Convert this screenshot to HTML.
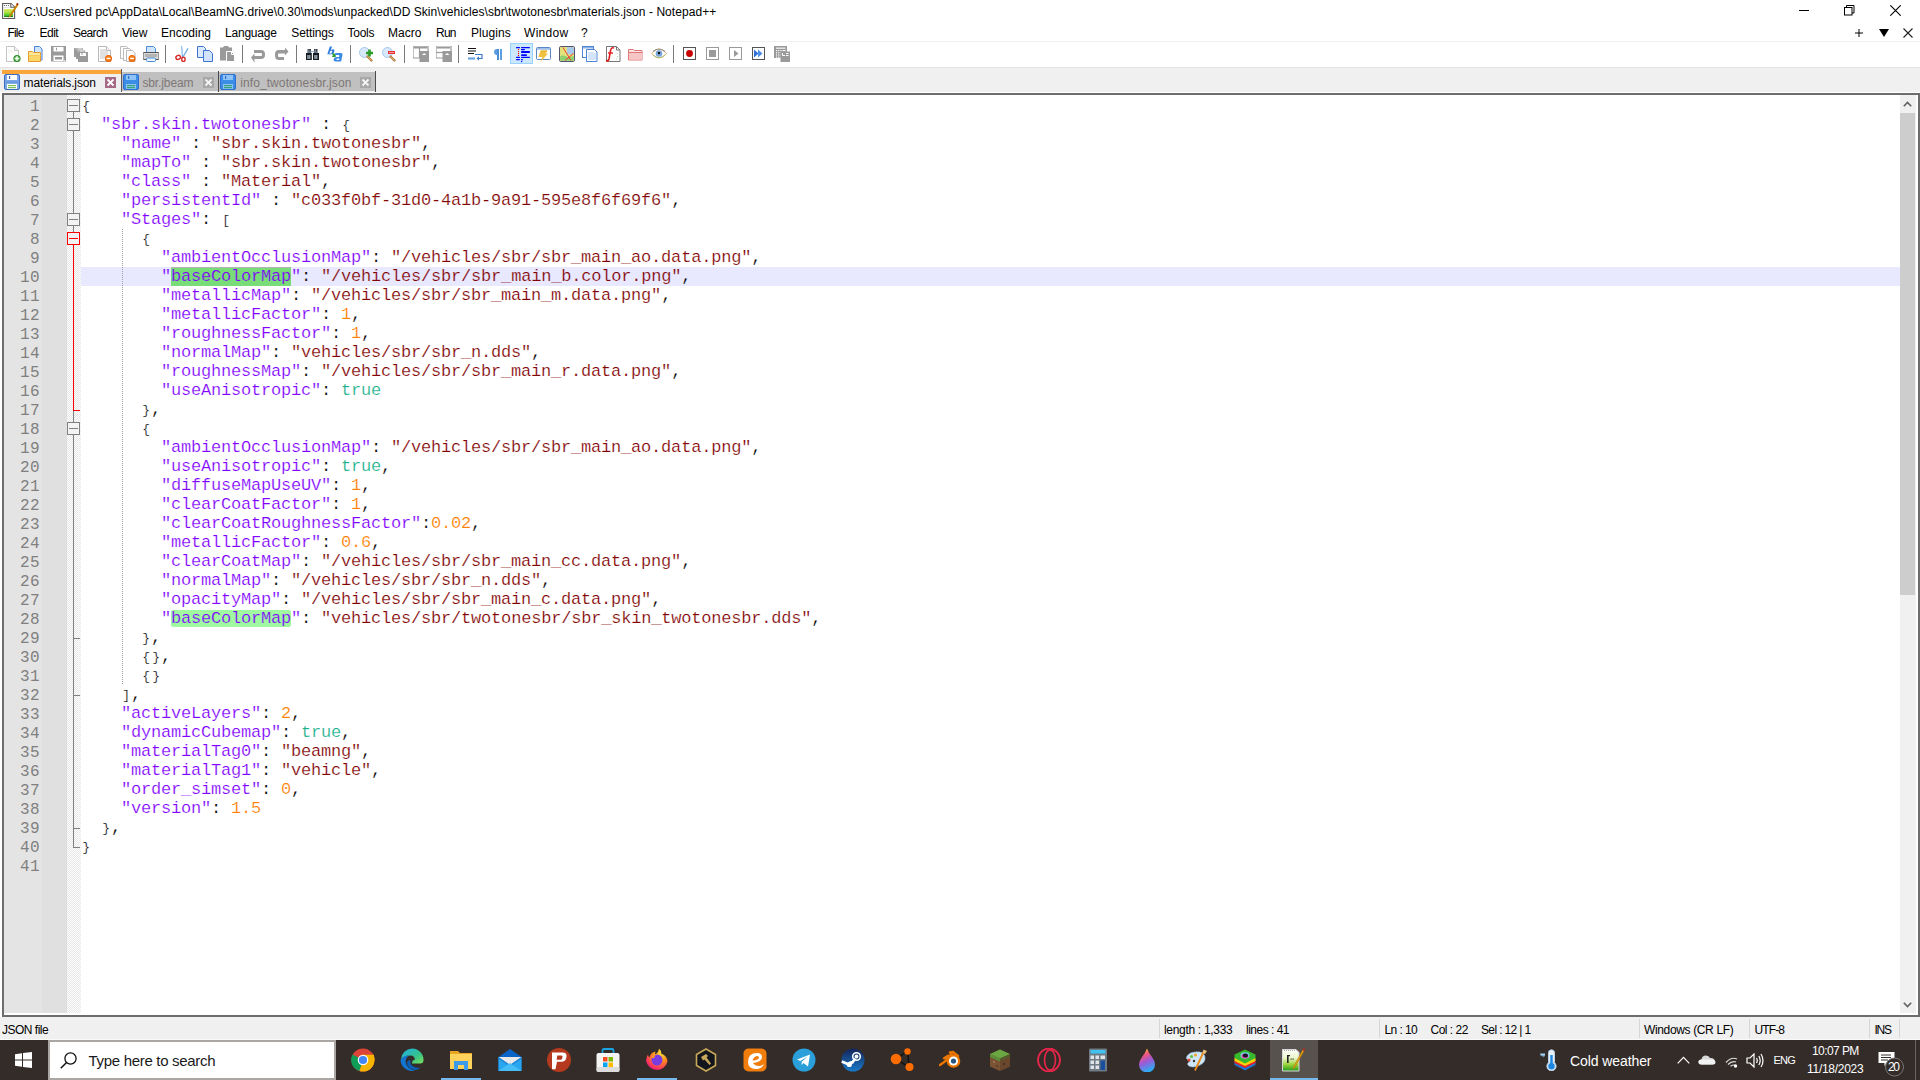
<!DOCTYPE html><html><head><meta charset="utf-8"><title>materials.json - Notepad++</title><style>
*{box-sizing:border-box}
html,body{margin:0;padding:0}
body{width:1920px;height:1080px;position:relative;overflow:hidden;background:#fff;font-family:"Liberation Sans",sans-serif;}
.a{position:absolute;display:block}
.ui{font-family:"Liberation Sans",sans-serif;font-size:12px;color:#000;white-space:pre;line-height:15px}
.code{font-family:"Liberation Mono",monospace;font-size:17px;letter-spacing:-0.2px;-webkit-text-stroke:0.2px #fff;white-space:pre;line-height:19px;height:19px;left:81px}
.b{display:inline-block;width:10px;text-align:center;font-size:13px;position:relative;top:0px}
.k{color:#8000ff}.s{color:#800000}.n{color:#ff8000}.t{color:#18af8a}.o{color:#000}
.ln{font-family:"Liberation Mono",monospace;font-size:16px;letter-spacing:0.4px;color:#808080;text-align:right;width:40px;margin-top:2px;left:0;line-height:19px;height:19px;white-space:pre}
.tb{font-family:"Liberation Sans",sans-serif;font-size:15px;color:#fff;white-space:pre;line-height:18px}
</style></head><body><div class="a" style="left:24.00px;top:5px;font-family:'Liberation Sans',sans-serif;font-size:12px;line-height:15px;color:#000;white-space:pre;letter-spacing:0.055px;">C:\Users\red pc\AppData\Local\BeamNG.drive\0.30\mods\unpacked\DD Skin\vehicles\sbr\twotonesbr\materials.json - Notepad++</div><svg class="a" style="left:0px;top:0px" width="20" height="22" viewBox="0 0 20 22"><defs><linearGradient id="ng" x1="0" y1="0" x2="0" y2="1"><stop offset="0" stop-color="#dfe86a"/><stop offset="0.45" stop-color="#a8e03a"/><stop offset="0.85" stop-color="#3cbf2a"/><stop offset="1" stop-color="#0a5a0a"/></linearGradient></defs>
<path d="M2.6 3.5h8.4l3.6 3.6v11.4h-12z" fill="#fff" stroke="#5a5a5a" stroke-width="1.1"/>
<path d="M10.8 3.6v3.6h3.6" fill="#fff" stroke="#5a5a5a" stroke-width="1.1"/>
<circle cx="4.5" cy="5.5" r="0.6" fill="#555"/><circle cx="6.5" cy="5.5" r="0.6" fill="#555"/><circle cx="8.5" cy="5.5" r="0.6" fill="#555"/>
<path d="M4.2 7.6h5.6" stroke="#c9d9e4" stroke-width="0.8"/>
<rect x="4" y="9" width="9" height="8" rx="0.6" fill="url(#ng)"/>
<path d="M17.2 4.3L10 15.5l-0.4 0.9 0.8-0.5L17.8 4.9z" fill="#f2b000" stroke="#c88400" stroke-width="1.2"/>
<path d="M16.6 3.2h1.6v1.6h-1.6z" fill="#8a0000"/></svg><div class="a" style="left:1799px;top:10px;width:10px;height:1px;background:#000"></div><svg class="a" style="left:1844px;top:5px" width="11" height="11" viewBox="0 0 11 11"><rect x="0.5" y="2.5" width="7.5" height="7.5" fill="none" stroke="#000"/><path d="M2.5 2.5v-2h7.5v7.5h-2" fill="none" stroke="#000"/></svg><svg class="a" style="left:1890px;top:5px" width="11" height="11" viewBox="0 0 11 11"><path d="M0.3 0.3L10.7 10.7M10.7 0.3L0.3 10.7" stroke="#000" stroke-width="1.1"/></svg><div class="a" style="left:7.50px;top:26px;font-family:'Liberation Sans',sans-serif;font-size:12px;line-height:15px;color:#000;white-space:pre;letter-spacing:-0.833px;">File</div><div class="a" style="left:39.40px;top:26px;font-family:'Liberation Sans',sans-serif;font-size:12px;line-height:15px;color:#000;white-space:pre;letter-spacing:-0.467px;">Edit</div><div class="a" style="left:73.10px;top:26px;font-family:'Liberation Sans',sans-serif;font-size:12px;line-height:15px;color:#000;white-space:pre;letter-spacing:-0.620px;">Search</div><div class="a" style="left:122.00px;top:26px;font-family:'Liberation Sans',sans-serif;font-size:12px;line-height:15px;color:#000;white-space:pre;letter-spacing:-0.167px;">View</div><div class="a" style="left:161.00px;top:26px;font-family:'Liberation Sans',sans-serif;font-size:12px;line-height:15px;color:#000;white-space:pre;letter-spacing:0.000px;">Encoding</div><div class="a" style="left:225.00px;top:26px;font-family:'Liberation Sans',sans-serif;font-size:12px;line-height:15px;color:#000;white-space:pre;letter-spacing:-0.214px;">Language</div><div class="a" style="left:291.30px;top:26px;font-family:'Liberation Sans',sans-serif;font-size:12px;line-height:15px;color:#000;white-space:pre;letter-spacing:-0.114px;">Settings</div><div class="a" style="left:347.50px;top:26px;font-family:'Liberation Sans',sans-serif;font-size:12px;line-height:15px;color:#000;white-space:pre;letter-spacing:-0.250px;">Tools</div><div class="a" style="left:388.00px;top:26px;font-family:'Liberation Sans',sans-serif;font-size:12px;line-height:15px;color:#000;white-space:pre;letter-spacing:0.000px;">Macro</div><div class="a" style="left:436.00px;top:26px;font-family:'Liberation Sans',sans-serif;font-size:12px;line-height:15px;color:#000;white-space:pre;letter-spacing:-0.750px;">Run</div><div class="a" style="left:471.00px;top:26px;font-family:'Liberation Sans',sans-serif;font-size:12px;line-height:15px;color:#000;white-space:pre;letter-spacing:0.083px;">Plugins</div><div class="a" style="left:524.00px;top:26px;font-family:'Liberation Sans',sans-serif;font-size:12px;line-height:15px;color:#000;white-space:pre;letter-spacing:0.300px;">Window</div><div class="a" style="left:581.00px;top:26px;font-family:'Liberation Sans',sans-serif;font-size:12px;line-height:15px;color:#000;white-space:pre;letter-spacing:0.000px;">?</div><svg class="a" style="left:1855px;top:29px" width="8" height="8" viewBox="0 0 8 8"><path d="M4 0v8M0 4h8" stroke="#000" stroke-width="1"/></svg><svg class="a" style="left:1879px;top:29px" width="10" height="8" viewBox="0 0 10 8"><path d="M0 0h10L5 8z" fill="#000"/></svg><svg class="a" style="left:1903px;top:28px" width="10" height="10" viewBox="0 0 10 10"><path d="M0.5 0.5L9.5 9.5M9.5 0.5L0.5 9.5" stroke="#202020" stroke-width="1.1"/></svg><div class="a" style="left:0;top:41px;width:1920px;height:1px;background:#f0f0f0"></div><div class="a" style="left:0;top:67px;width:1920px;height:1px;background:#e3e3e3"></div><div class="a" style="left:510px;top:43px;width:23px;height:21px;background:#cce8ff;border:1px solid #99d1ff"></div><svg class="a" style="left:5px;top:46px" width="16" height="16" viewBox="0 0 16 16"><path d="M1.5 0.5h8l4 4v11h-12z" fill="#fff" stroke="#c4c4c4"/><path d="M9.5 0.5v4h4" fill="#f0f0f0" stroke="#c4c4c4"/>
<path d="M3 4h4M3 6h6" stroke="#eee"/>
<circle cx="12" cy="12.5" r="3.6" fill="#2f8f2f"/><circle cx="12" cy="12.5" r="2.6" fill="#55b24a"/><path d="M12 10.3v4.4M9.8 12.5h4.4" stroke="#fff" stroke-width="1.4"/></svg><svg class="a" style="left:28px;top:46px" width="16" height="16" viewBox="0 0 16 16"><path d="M6.5 0.5h5l2.5 2.5v11h-7.5z" fill="#cfe3fb" stroke="#4b86d6"/>
<path d="M0.5 5.5h4l1 1h7v9h-12z" fill="#fde79a" stroke="#e99a2c"/><path d="M0.5 9.5h12" stroke="#f7c95a"/><rect x="1" y="10" width="11" height="5" fill="#fbd66a"/></svg><svg class="a" style="left:51px;top:46px" width="16" height="16" viewBox="0 0 16 16"><path d="M0 0h15v15.5h-15z" fill="#9a9a9a"/><rect x="2.5" y="1" width="10" height="4.5" fill="#fff"/><rect x="5" y="1.8" width="1" height="2.5" fill="#9a9a9a"/>
<rect x="2.5" y="9.5" width="10" height="5.5" fill="#fff"/><rect x="4" y="11" width="7" height="2.5" fill="#9a9a9a"/><rect x="13.2" y="14" width="1" height="1" fill="#fff"/></svg><svg class="a" style="left:74px;top:47px" width="16" height="16" viewBox="0 0 16 16"><path d="M0 1h9v9h-9z" fill="#9a9a9a"/><path d="M2 3h9v9h-9z" fill="#9a9a9a"/><path d="M4 5h10v10h-10z" fill="#9a9a9a"/>
<rect x="1.5" y="1.5" width="1" height="1" fill="#fff"/><rect x="3.5" y="1.5" width="5" height="1" fill="#fff"/><rect x="3.5" y="3.5" width="1" height="1" fill="#fff"/><rect x="5.5" y="3.5" width="5" height="1" fill="#fff"/>
<rect x="6" y="6" width="6" height="3" fill="#fff"/><rect x="7.5" y="6" width="1" height="2" fill="#9a9a9a"/></svg><svg class="a" style="left:97px;top:46px" width="16" height="16" viewBox="0 0 16 16"><path d="M1.5 0.5h8l4 4v11h-12z" fill="#fff" stroke="#b8b8b8"/><path d="M9.5 0.5v4h4" fill="#f4f4f4" stroke="#b8b8b8"/>
<path d="M3 4h6M3 6h8M3 8h8M3 10h6M3 12h5" stroke="#9a9a9a" stroke-width="0.6"/>
<circle cx="11.5" cy="12.5" r="3.5" fill="#e8600a"/><circle cx="11.5" cy="12.3" r="2.6" fill="#f4801e"/><rect x="9.6" y="11.8" width="3.8" height="1.3" fill="#fff"/></svg><svg class="a" style="left:120px;top:46px" width="16" height="16" viewBox="0 0 16 16"><path d="M0.5 0.5h6l2 2v10h-8z" fill="#fff" stroke="#bbb"/><path d="M3.5 2.5h6l2 2v10h-8z" fill="#fff" stroke="#bbb"/><path d="M6.5 4.5h6l2.5 2.5v8.5h-8.5z" fill="#fff" stroke="#bbb"/>
<circle cx="12" cy="12.5" r="3.5" fill="#e8600a"/><circle cx="12" cy="12.3" r="2.6" fill="#f4801e"/><rect x="10.1" y="11.8" width="3.8" height="1.3" fill="#fff"/></svg><svg class="a" style="left:143px;top:46px" width="16" height="16" viewBox="0 0 16 16"><path d="M3.5 0.5h7l2 2v5h-9z" fill="#cfe4fb" stroke="#4b8fd9"/>
<path d="M1 6.5h14q1 0 1 1v5q0 1-1 1h-14q-1 0-1-1v-5q0-1 1-1z" fill="#d8d8d8" stroke="#555" stroke-width="1"/><rect x="2" y="8" width="12" height="3" fill="#b4b4b4"/><rect x="3.5" y="12" width="9" height="3.5" rx="1" fill="#eaf4ff" stroke="#4b8fd9"/></svg><svg class="a" style="left:174px;top:46px" width="16" height="16" viewBox="0 0 16 16"><path d="M7.5 0.2L8.6 11" stroke="#6aaee6" stroke-width="1.3"/><path d="M14 2.4L9.3 10.5" stroke="#6aaee6" stroke-width="1.3"/><path d="M7.6 1L8.4 9" stroke="#e6f2fb" stroke-width="0.5"/>
<ellipse cx="4.2" cy="11.4" rx="2.4" ry="1.9" fill="none" stroke="#d42a2a" stroke-width="1.4" transform="rotate(-25 4.2 11.4)"/><ellipse cx="9.4" cy="13.4" rx="1.7" ry="2.1" fill="none" stroke="#d42a2a" stroke-width="1.4"/></svg><svg class="a" style="left:197px;top:46px" width="16" height="16" viewBox="0 0 16 16"><path d="M0.5 0.5h6l2 2v9h-8z" fill="#dbe9fb" stroke="#3c74d0"/><path d="M6.5 4.5h6l3 3v8h-9z" fill="#d2e4fb" stroke="#3c74d0"/></svg><svg class="a" style="left:220px;top:46px" width="16" height="16" viewBox="0 0 16 16"><path d="M0 1.5h3l1-1.5h4l1 1.5h3v13h-12z" fill="#9a9a9a"/><path d="M6.5 5.5h5l3 3v7h-8z" fill="#9a9a9a" stroke="#fff" stroke-width="1"/><path d="M11.5 5.5v3h3" fill="none" stroke="#fff"/></svg><svg class="a" style="left:251px;top:47px" width="16" height="16" viewBox="0 0 16 16"><path d="M3 3h7q4 0 4 4v1q0 4-4 4h-4v-3h4q1 0 1-1v-1q0-1-1-1h-7z" fill="#9a9a9a"/><path d="M0 10.5L3.5 6.5v9z" fill="#9a9a9a"/><rect x="3" y="9" width="4" height="3" fill="#9a9a9a"/></svg><svg class="a" style="left:274px;top:47px" width="16" height="16" viewBox="0 0 16 16"><path d="M11 3h-6q-4 0-4 4v1.5q0 4.5 4 4.5h5v-3h-5q-1 0-1-1.5v-1q0-1 1-1h6z" fill="#9a9a9a"/><path d="M14.5 4.5L11 0.5v8z" fill="#9a9a9a"/></svg><svg class="a" style="left:306px;top:47px" width="16" height="16" viewBox="0 0 16 16"><path d="M1.5 2h3.5v5h-3.5z M8 2h3.5v5h-3.5z" fill="#3a4048"/><path d="M0 6h5.8v7h-5.8z M7 6h6v7h-6z" fill="#15181c"/><path d="M1 5.5q5.5-2 11 0" stroke="#8da2bb" stroke-width="1" fill="none"/>
<rect x="1.3" y="8" width="1.4" height="4" fill="#a9b8c8"/><rect x="3.2" y="8" width="1.2" height="4" fill="#a9b8c8"/><rect x="8.3" y="8" width="1.4" height="4" fill="#a9b8c8"/><rect x="10.2" y="8" width="1.2" height="4" fill="#a9b8c8"/><rect x="2.2" y="2.5" width="1.2" height="2.5" fill="#7c8794"/><rect x="8.8" y="2.5" width="1.2" height="2.5" fill="#7c8794"/></svg><svg class="a" style="left:327px;top:46px" width="16" height="16" viewBox="0 0 16 16"><path d="M2.8 0.5h2.2l-1.3 4.2q1.2-1.4 2.4-1.4q1.6 0 1.3 1.8l-0.5 1.6q-0.6 1.6-2.4 1.6h-4.2z M3 5.5l-0.6 2h1.2q0.9 0 1.2-0.9l0.3-1q0.2-0.9-0.5-0.9q-0.9 0-1.6 0.8z" fill="#2f7de0"/>
<path d="M5.5 7.5l2.5 2.5M8 7.5v2.8h-2.8" stroke="#2e9a2e" stroke-width="1.4" fill="none"/>
<path d="M8.5 7h5.5q1.8 0 1.5 1.8l-1.4 6.7h-5.4q-2.4 0-2-2.2q0.4-2.4 2.9-2.4h2.5l0.2-1q0.2-0.9-0.8-0.9h-3.5z M10.5 12.5q-1 0-1.1 0.8q-0.1 0.7 0.7 0.7h2l0.3-1.5z" fill="#3b8ae6"/></svg><svg class="a" style="left:359px;top:47px" width="16" height="16" viewBox="0 0 16 16"><circle cx="5.5" cy="5.5" r="5" fill="#d8e8fb" stroke="#a9c7ee"/><path d="M8.5 9.5l4 4" stroke="#b07a3a" stroke-width="2.4" stroke-linecap="round"/><path d="M8.5 9.5l4 4" stroke="#e8b070" stroke-width="1"/>
<path d="M10.5 2.5v7M7 6h7" stroke="#2a9a2a" stroke-width="2.6"/></svg><svg class="a" style="left:382px;top:47px" width="16" height="16" viewBox="0 0 16 16"><circle cx="5.5" cy="5.5" r="5" fill="#d8e8fb" stroke="#a9c7ee"/><path d="M8.5 9.5l4 4" stroke="#b07a3a" stroke-width="2.4" stroke-linecap="round"/><path d="M8.5 9.5l4 4" stroke="#e8b070" stroke-width="1"/>
<rect x="6" y="4" width="7" height="3" fill="#e53333"/><rect x="7" y="5" width="5" height="1" fill="#ff9090"/></svg><svg class="a" style="left:413px;top:46px" width="16" height="16" viewBox="0 0 16 16"><path d="M0.5 0.5h14v1h-14z" fill="#9a9a9a"/><path d="M0 0h15v12h-15z" fill="none" stroke="#9a9a9a" stroke-width="1.2"/><path d="M6.5 2v10" stroke="#9a9a9a" stroke-width="1.2"/>
<rect x="6.5" y="5" width="9.5" height="11" fill="#9a9a9a"/><path d="M9 9l2.2-2 2.2 2z" fill="#fff"/><rect x="1" y="1" width="13" height="1.5" fill="#9a9a9a"/></svg><svg class="a" style="left:436px;top:46px" width="16" height="16" viewBox="0 0 16 16"><path d="M0 0h15v12h-15z" fill="none" stroke="#9a9a9a" stroke-width="1.2"/><rect x="1" y="1" width="13" height="1.5" fill="#9a9a9a"/><path d="M0 6.5h15" stroke="#9a9a9a" stroke-width="1.2"/>
<rect x="6.5" y="5" width="9.5" height="11" fill="#9a9a9a"/><path d="M9 9l2.2-2 2.2 2z" fill="#fff"/></svg><svg class="a" style="left:467px;top:47px" width="16" height="16" viewBox="0 0 16 16"><path d="M1 1.5h8M1 4h8M1 6.5h6" stroke="#111" stroke-width="1.2"/><path d="M1 11.5h7" stroke="#6aa3e0" stroke-width="2.2"/><path d="M8 7.5h7v4h-3" fill="none" stroke="#3c78c8" stroke-width="1.2"/><path d="M12 9.2v4.6l-2.5-2.3z" fill="#3c78c8"/></svg><svg class="a" style="left:491px;top:48px" width="16" height="16" viewBox="0 0 16 16"><path d="M4 1h4v11h-2v-5q-3 0-3-3t3-3z" fill="#5a9ee4"/><rect x="6" y="1" width="2" height="11" fill="#4a8ed8"/><rect x="9" y="1" width="2" height="11" fill="#5a9ee4"/></svg><svg class="a" style="left:515px;top:47px" width="16" height="16" viewBox="0 0 16 16"><g fill="#0000ff"><rect x="1" y="0" width="4" height="1.3" rx="0.6"/><rect x="6" y="0" width="9" height="1.3" rx="0.6"/><rect x="6" y="2" width="4" height="1.2" rx="0.6"/><rect x="6" y="4" width="9" height="2" rx="0.8"/><rect x="6" y="7.2" width="6" height="1.8" rx="0.8"/>
<rect x="1" y="9.8" width="4" height="1.3" rx="0.6"/><rect x="6" y="9.8" width="9" height="1.3" rx="0.6"/><rect x="1" y="11.9" width="4" height="1.3" rx="0.6"/><rect x="6" y="11.9" width="2" height="1.3" rx="0.6"/><circle cx="6.6" cy="14.5" r="0.7"/></g>
<g fill="#ff0000"><circle cx="3.5" cy="2.6" r="0.65"/><circle cx="3.5" cy="4.6" r="0.65"/><circle cx="3.5" cy="6.5" r="0.65"/><circle cx="3.5" cy="8.4" r="0.65"/></g></svg><svg class="a" style="left:536px;top:47px" width="16" height="16" viewBox="0 0 16 16"><rect x="0.5" y="0.5" width="14" height="12" rx="1" fill="#fff" stroke="#5b86c4"/><rect x="1" y="1" width="13" height="1.8" fill="#9dbfe8"/><path d="M4.5 3.5h7l-2 3h2.5l-7.5 8.5 1.8-5h-4z" fill="#f0c040"/><path d="M5 4h6" stroke="#e0a820" stroke-width="0.8"/></svg><svg class="a" style="left:559px;top:46px" width="16" height="16" viewBox="0 0 16 16"><rect x="0.5" y="0.5" width="15" height="15" rx="1.2" fill="#e2e27a" stroke="#545474" stroke-width="1"/><path d="M8 1.2h6.8v7h-6.8z" fill="#a8c8ee"/><path d="M1.2 10q3-1 6 0.5t7.6-0.5v4.8h-13.6z" fill="#8cd070"/><path d="M4 1.5l8 13M6 14.5l8.5-7" stroke="#f04030" stroke-width="1"/></svg><svg class="a" style="left:582px;top:46px" width="16" height="16" viewBox="0 0 16 16"><path d="M0.5 0.5h11v2h-11z" fill="#8fb3e3"/><rect x="0.5" y="0.5" width="11" height="11" fill="none" stroke="#4b86d6"/><path d="M4.5 3.5h8l2.5 2.5v9.5h-10.5z" fill="#fff" stroke="#4b86d6"/><path d="M6 6h6l2 2v6h-8z" fill="#d4e4fa"/></svg><svg class="a" style="left:605px;top:46px" width="16" height="16" viewBox="0 0 16 16"><path d="M1.5 0.5h10l3.5 3.5v11.5h-13.5z" fill="#fff" stroke="#777"/><path d="M11.5 0.5v3.5h3.5" fill="none" stroke="#777"/><path d="M9 2q-3-1-3.5 3l-1.5 8q-0.5 2-3 2" fill="none" stroke="#e02020" stroke-width="1.6"/><path d="M3 7h5" stroke="#e02020" stroke-width="1.4"/>
<path d="M12 7v1M12.5 10v1M11 13h1" stroke="#9c9" stroke-width="0.8"/></svg><svg class="a" style="left:628px;top:48px" width="16" height="16" viewBox="0 0 16 16"><path d="M0.5 1.5h5l1 1h7.5v9.5h-13.5z" fill="#fbe1e1" stroke="#e07a7a"/><path d="M1 5h13v6.5h-13z" fill="#f6c6c6"/><path d="M0.5 4.5h14" stroke="#e07a7a"/></svg><svg class="a" style="left:651px;top:47px" width="16" height="16" viewBox="0 0 16 16"><path d="M0.5 6.5q7.5-9 15 0q-7.5 9-15 0z" fill="#fff" stroke="#e3b36a" stroke-width="1"/><path d="M2 4.5q6-5 12 0" stroke="#8a8a8a" stroke-width="1.2" fill="none"/><circle cx="8" cy="6.5" r="3.3" fill="#7aa6d8"/><circle cx="8" cy="6" r="1.2" fill="#111"/><path d="M2 8q6 5 12 0" stroke="#7ab07a" stroke-width="0.6" fill="none"/></svg><svg class="a" style="left:683px;top:47px" width="16" height="16" viewBox="0 0 16 16"><rect x="0.5" y="0.5" width="12" height="12" fill="#fff" stroke="#555"/><circle cx="6.5" cy="6.5" r="3.4" fill="#c80000"/></svg><svg class="a" style="left:706px;top:47px" width="16" height="16" viewBox="0 0 16 16"><rect x="0.5" y="0.5" width="12" height="12" fill="#fff" stroke="#9a9a9a"/><rect x="3" y="3" width="7" height="7" fill="#9a9a9a"/></svg><svg class="a" style="left:729px;top:47px" width="16" height="16" viewBox="0 0 16 16"><rect x="0.5" y="0.5" width="12" height="12" fill="#fff" stroke="#9a9a9a"/><path d="M5 3v7l4.5-3.5z" fill="#9a9a9a"/></svg><svg class="a" style="left:752px;top:47px" width="16" height="16" viewBox="0 0 16 16"><rect x="0.5" y="0.5" width="12" height="12" fill="#fff" stroke="#555"/><path d="M2 2.5v8l4.5-4z" fill="#2e6fd8"/><path d="M6 2.5v8l4.5-4z" fill="#4a8ee8"/></svg><svg class="a" style="left:774px;top:46px" width="16" height="16" viewBox="0 0 16 16"><rect x="0" y="0" width="13" height="12" fill="#9a9a9a"/><rect x="2" y="1.6" width="9.5" height="1.1" fill="#fff"/><rect x="8.5" y="4" width="3" height="1.1" fill="#fff"/><rect x="2.0" y="4.0" width="1.2" height="1.2" fill="#fff"/><rect x="4.2" y="4.0" width="1.2" height="1.2" fill="#fff"/><rect x="6.4" y="4.0" width="1.2" height="1.2" fill="#fff"/><rect x="2.0" y="6.2" width="1.2" height="1.2" fill="#fff"/><rect x="4.2" y="6.2" width="1.2" height="1.2" fill="#fff"/><rect x="6.4" y="6.2" width="1.2" height="1.2" fill="#fff"/><rect x="2.0" y="8.4" width="1.2" height="1.2" fill="#fff"/><rect x="4.2" y="8.4" width="1.2" height="1.2" fill="#fff"/><rect x="6.4" y="8.4" width="1.2" height="1.2" fill="#fff"/><rect x="2.0" y="10.6" width="1.2" height="1.2" fill="#fff"/><rect x="4.2" y="10.6" width="1.2" height="1.2" fill="#fff"/><rect x="6.4" y="10.6" width="1.2" height="1.2" fill="#fff"/><rect x="6.5" y="5.5" width="9.5" height="10.5" fill="#9a9a9a"/><path d="M8.5 7v2.5h2.5M12 7.5h2.5M12 9.5h2.5" stroke="#fff" stroke-width="1" fill="none"/></svg><div class="a" style="left:165px;top:45px;width:1px;height:18px;background:#7a7a7a"></div><div class="a" style="left:242px;top:45px;width:1px;height:18px;background:#7a7a7a"></div><div class="a" style="left:296px;top:45px;width:1px;height:18px;background:#7a7a7a"></div><div class="a" style="left:350px;top:45px;width:1px;height:18px;background:#7a7a7a"></div><div class="a" style="left:404px;top:45px;width:1px;height:18px;background:#7a7a7a"></div><div class="a" style="left:458px;top:45px;width:1px;height:18px;background:#7a7a7a"></div><div class="a" style="left:673px;top:45px;width:1px;height:18px;background:#7a7a7a"></div><div class="a" style="left:0;top:68px;width:1920px;height:25px;background:#f0f0f0"></div><div class="a" style="left:2px;top:70px;width:119px;height:23px;background:#efefef"></div><div class="a" style="left:2px;top:70px;width:119px;height:4px;background:#faa63a"></div><div class="a" style="left:121px;top:69px;width:1px;height:24px;background:#5a5a5a"></div><svg class="a" style="left:4px;top:74px" width="16" height="16" viewBox="0 0 16 16"><rect x="0.5" y="0.5" width="15" height="15" rx="1.5" fill="#7da6e6" stroke="#3a6cc0"/><rect x="3" y="1" width="10" height="5" fill="#fff"/><rect x="5" y="2" width="1.2" height="3" fill="#3a6cc0"/>
<rect x="3" y="10" width="10" height="5" fill="#fff"/><rect x="4" y="11" width="8" height="1.2" fill="#7bc05a"/><rect x="4" y="13" width="8" height="1.2" fill="#7bc05a"/><rect x="1.5" y="7" width="13" height="2" fill="#6a9ae0"/></svg><div class="a" style="left:23.50px;top:76px;font-family:'Liberation Sans',sans-serif;font-size:12px;line-height:15px;color:#000;white-space:pre;letter-spacing:-0.115px;">materials.json</div><svg class="a" style="left:105px;top:77px" width="11" height="11" viewBox="0 0 11 11"><rect x="0" y="0" width="11" height="11" fill="#a56b86"/><path d="M2.5 2.5l6 6M8.5 2.5l-6 6" stroke="#fff" stroke-width="1.8"/></svg><div class="a" style="left:122px;top:72px;width:96px;height:19px;background:#c0c0c0"></div><div class="a" style="left:218px;top:71px;width:1px;height:21px;background:#4a4a4a"></div><svg class="a" style="left:123px;top:74px" width="16" height="16" viewBox="0 0 16 16"><rect x="0.5" y="0.5" width="15" height="15" rx="1.5" fill="#3b8de6" stroke="#2f6fcf"/><rect x="3" y="1" width="10" height="5" fill="#8fc3f5"/><rect x="5" y="2" width="1.2" height="3" fill="#2f6fcf"/>
<rect x="3" y="10" width="10" height="5" fill="#8fc3f5"/><rect x="4" y="11" width="8" height="1.2" fill="#3aa37a"/><rect x="4" y="13" width="8" height="1.2" fill="#3aa37a"/></svg><div class="a" style="left:142.40px;top:76px;font-family:'Liberation Sans',sans-serif;font-size:12px;line-height:15px;color:#7d7775;white-space:pre;letter-spacing:-0.113px;">sbr.jbeam</div><svg class="a" style="left:203px;top:77px" width="11" height="11" viewBox="0 0 11 11"><rect x="0" y="0" width="11" height="11" fill="#a8a8a8"/><path d="M2.5 2.5l6 6M8.5 2.5l-6 6" stroke="#f4f4f4" stroke-width="1.8"/></svg><div class="a" style="left:219px;top:72px;width:156px;height:19px;background:#c0c0c0"></div><div class="a" style="left:375px;top:71px;width:1px;height:21px;background:#4a4a4a"></div><svg class="a" style="left:220px;top:74px" width="16" height="16" viewBox="0 0 16 16"><rect x="0.5" y="0.5" width="15" height="15" rx="1.5" fill="#3b8de6" stroke="#2f6fcf"/><rect x="3" y="1" width="10" height="5" fill="#8fc3f5"/><rect x="5" y="2" width="1.2" height="3" fill="#2f6fcf"/>
<rect x="3" y="10" width="10" height="5" fill="#8fc3f5"/><rect x="4" y="11" width="8" height="1.2" fill="#3aa37a"/><rect x="4" y="13" width="8" height="1.2" fill="#3aa37a"/></svg><div class="a" style="left:240.20px;top:76px;font-family:'Liberation Sans',sans-serif;font-size:12px;line-height:15px;color:#7d7775;white-space:pre;letter-spacing:0.095px;">info_twotonesbr.json</div><svg class="a" style="left:360px;top:77px" width="11" height="11" viewBox="0 0 11 11"><rect x="0" y="0" width="11" height="11" fill="#a8a8a8"/><path d="M2.5 2.5l6 6M8.5 2.5l-6 6" stroke="#f4f4f4" stroke-width="1.8"/></svg><div class="a" style="left:0;top:92px;width:1920px;height:1px;background:#fff"></div><div class="a" style="left:2px;top:93px;width:1918px;height:2px;background:#6d6d6d"></div><div class="a" style="left:2px;top:93px;width:2px;height:924px;background:#6d6d6d"></div><div class="a" style="left:1918px;top:93px;width:2px;height:924px;background:#6d6d6d"></div><div class="a" style="left:1916px;top:95px;width:2px;height:920px;background:#fff"></div><div class="a" style="left:2px;top:1015px;width:1918px;height:2px;background:#6d6d6d"></div><div class="a" style="left:4px;top:1013px;width:1912px;height:2px;background:#fff"></div><div class="a" style="left:4px;top:95px;width:38px;height:918px;background:#e4e4e4"></div><div class="a" style="left:42px;top:95px;width:25px;height:918px;background:#e0e0e0"></div><div class="a" style="left:67px;top:95px;width:14px;height:918px;background-color:#fff;background-image:conic-gradient(#e6e6e6 25%,#fff 0 50%,#e6e6e6 0 75%,#fff 0);background-size:2px 2px"></div><div class="a" style="left:1900px;top:95px;width:16px;height:918px;background:#f0f0f0"></div><div class="a" style="left:1900px;top:113px;width:15px;height:482px;background:#cdcdcd"></div><svg class="a" style="left:1903px;top:101px" width="9" height="6" viewBox="0 0 9 6"><path d="M0.8 5.2L4.5 1.5L8.2 5.2" fill="none" stroke="#606060" stroke-width="1.6"/></svg><svg class="a" style="left:1903px;top:1002px" width="9" height="6" viewBox="0 0 9 6"><path d="M0.8 0.8L4.5 4.5L8.2 0.8" fill="none" stroke="#606060" stroke-width="1.6"/></svg><div class="a" style="left:81px;top:267px;width:1819px;height:19px;background:#e8e8ff"></div><div class="a" style="left:171px;top:267px;width:120px;height:19px;background:#78dc78;border-top:1px solid #b4b4b4"></div><div class="a" style="left:171px;top:610px;width:120px;height:17px;background:#a0f8a0;border-radius:2px"></div><div class="a" style="left:122px;top:229px;width:1px;height:455px;background-image:linear-gradient(#a0a0a0 50%,transparent 50%);background-size:1px 2px"></div><svg class="a" style="left:0px;top:0px" width="81" height="1080" viewBox="0 0 81 1080"><rect x="73" y="112" width="1" height="736" fill="#808080"/><rect x="73" y="245" width="1" height="166" fill="#ff0000"/><rect x="73" y="638" width="7" height="1" fill="#808080"/><rect x="73" y="695" width="7" height="1" fill="#808080"/><rect x="73" y="828" width="7" height="1" fill="#808080"/><rect x="73" y="847" width="7" height="1" fill="#808080"/><rect x="73" y="410" width="7" height="1" fill="#ff0000"/><rect x="67.5" y="99.5" width="12" height="12" fill="#f3f3f3" stroke="#808080" stroke-width="1"/><rect x="69" y="105" width="9" height="1" fill="#808080"/><rect x="67.5" y="118.5" width="12" height="12" fill="#f3f3f3" stroke="#808080" stroke-width="1"/><rect x="69" y="124" width="9" height="1" fill="#808080"/><rect x="67.5" y="213.5" width="12" height="12" fill="#f3f3f3" stroke="#808080" stroke-width="1"/><rect x="69" y="219" width="9" height="1" fill="#808080"/><rect x="67.5" y="422.5" width="12" height="12" fill="#f3f3f3" stroke="#808080" stroke-width="1"/><rect x="69" y="428" width="9" height="1" fill="#808080"/><rect x="67.5" y="232.5" width="12" height="12" fill="#f3f3f3" stroke="#ff0000" stroke-width="1"/><rect x="69" y="238" width="9" height="1" fill="#ff0000"/></svg><div class="a ln" style="top:96px">1</div><div class="a code" style="top:96px"><span class="o"><span class="b">{</span></span></div><div class="a ln" style="top:115px">2</div><div class="a code" style="top:115px"><span class="o">  </span><span class="k">"sbr.skin.twotonesbr"</span><span class="o"> : <span class="b">{</span></span></div><div class="a ln" style="top:134px">3</div><div class="a code" style="top:134px"><span class="o">    </span><span class="k">"name"</span><span class="o"> : </span><span class="s">"sbr.skin.twotonesbr"</span><span class="o">,</span></div><div class="a ln" style="top:153px">4</div><div class="a code" style="top:153px"><span class="o">    </span><span class="k">"mapTo"</span><span class="o"> : </span><span class="s">"sbr.skin.twotonesbr"</span><span class="o">,</span></div><div class="a ln" style="top:172px">5</div><div class="a code" style="top:172px"><span class="o">    </span><span class="k">"class"</span><span class="o"> : </span><span class="s">"Material"</span><span class="o">,</span></div><div class="a ln" style="top:191px">6</div><div class="a code" style="top:191px"><span class="o">    </span><span class="k">"persistentId"</span><span class="o"> : </span><span class="s">"c033f0bf-31d0-4a1b-9a91-595e8f6f69f6"</span><span class="o">,</span></div><div class="a ln" style="top:210px">7</div><div class="a code" style="top:210px"><span class="o">    </span><span class="k">"Stages"</span><span class="o">: <span class="b">[</span></span></div><div class="a ln" style="top:229px">8</div><div class="a code" style="top:229px"><span class="o">      <span class="b">{</span></span></div><div class="a ln" style="top:248px">9</div><div class="a code" style="top:248px"><span class="o">        </span><span class="k">"ambientOcclusionMap"</span><span class="o">: </span><span class="s">"/vehicles/sbr/sbr_main_ao.data.png"</span><span class="o">,</span></div><div class="a ln" style="top:267px">10</div><div class="a code" style="top:267px;-webkit-text-stroke-color:#e8e8ff"><span class="o">        </span><span class="k">"<span style="-webkit-text-stroke-color:#78dc78">baseColorMap</span>"</span><span class="o">: </span><span class="s">"/vehicles/sbr/sbr_main_b.color.png"</span><span class="o">,</span></div><div class="a ln" style="top:286px">11</div><div class="a code" style="top:286px"><span class="o">        </span><span class="k">"metallicMap"</span><span class="o">: </span><span class="s">"/vehicles/sbr/sbr_main_m.data.png"</span><span class="o">,</span></div><div class="a ln" style="top:305px">12</div><div class="a code" style="top:305px"><span class="o">        </span><span class="k">"metallicFactor"</span><span class="o">: </span><span class="n">1</span><span class="o">,</span></div><div class="a ln" style="top:324px">13</div><div class="a code" style="top:324px"><span class="o">        </span><span class="k">"roughnessFactor"</span><span class="o">: </span><span class="n">1</span><span class="o">,</span></div><div class="a ln" style="top:343px">14</div><div class="a code" style="top:343px"><span class="o">        </span><span class="k">"normalMap"</span><span class="o">: </span><span class="s">"vehicles/sbr/sbr_n.dds"</span><span class="o">,</span></div><div class="a ln" style="top:362px">15</div><div class="a code" style="top:362px"><span class="o">        </span><span class="k">"roughnessMap"</span><span class="o">: </span><span class="s">"/vehicles/sbr/sbr_main_r.data.png"</span><span class="o">,</span></div><div class="a ln" style="top:381px">16</div><div class="a code" style="top:381px"><span class="o">        </span><span class="k">"useAnisotropic"</span><span class="o">: </span><span class="t">true</span></div><div class="a ln" style="top:400px">17</div><div class="a code" style="top:400px"><span class="o">      <span class="b">}</span>,</span></div><div class="a ln" style="top:419px">18</div><div class="a code" style="top:419px"><span class="o">      <span class="b">{</span></span></div><div class="a ln" style="top:438px">19</div><div class="a code" style="top:438px"><span class="o">        </span><span class="k">"ambientOcclusionMap"</span><span class="o">: </span><span class="s">"/vehicles/sbr/sbr_main_ao.data.png"</span><span class="o">,</span></div><div class="a ln" style="top:457px">20</div><div class="a code" style="top:457px"><span class="o">        </span><span class="k">"useAnisotropic"</span><span class="o">: </span><span class="t">true</span><span class="o">,</span></div><div class="a ln" style="top:476px">21</div><div class="a code" style="top:476px"><span class="o">        </span><span class="k">"diffuseMapUseUV"</span><span class="o">: </span><span class="n">1</span><span class="o">,</span></div><div class="a ln" style="top:495px">22</div><div class="a code" style="top:495px"><span class="o">        </span><span class="k">"clearCoatFactor"</span><span class="o">: </span><span class="n">1</span><span class="o">,</span></div><div class="a ln" style="top:514px">23</div><div class="a code" style="top:514px"><span class="o">        </span><span class="k">"clearCoatRoughnessFactor"</span><span class="o">:</span><span class="n">0.02</span><span class="o">,</span></div><div class="a ln" style="top:533px">24</div><div class="a code" style="top:533px"><span class="o">        </span><span class="k">"metallicFactor"</span><span class="o">: </span><span class="n">0.6</span><span class="o">,</span></div><div class="a ln" style="top:552px">25</div><div class="a code" style="top:552px"><span class="o">        </span><span class="k">"clearCoatMap"</span><span class="o">: </span><span class="s">"/vehicles/sbr/sbr_main_cc.data.png"</span><span class="o">,</span></div><div class="a ln" style="top:571px">26</div><div class="a code" style="top:571px"><span class="o">        </span><span class="k">"normalMap"</span><span class="o">: </span><span class="s">"/vehicles/sbr/sbr_n.dds"</span><span class="o">,</span></div><div class="a ln" style="top:590px">27</div><div class="a code" style="top:590px"><span class="o">        </span><span class="k">"opacityMap"</span><span class="o">: </span><span class="s">"/vehicles/sbr/sbr_main_c.data.png"</span><span class="o">,</span></div><div class="a ln" style="top:609px">28</div><div class="a code" style="top:609px"><span class="o">        </span><span class="k">"<span style="-webkit-text-stroke-color:#a0f8a0">baseColorMap</span>"</span><span class="o">: </span><span class="s">"vehicles/sbr/twotonesbr/sbr_skin_twotonesbr.dds"</span><span class="o">,</span></div><div class="a ln" style="top:628px">29</div><div class="a code" style="top:628px"><span class="o">      <span class="b">}</span>,</span></div><div class="a ln" style="top:647px">30</div><div class="a code" style="top:647px"><span class="o">      <span class="b">{</span><span class="b">}</span>,</span></div><div class="a ln" style="top:666px">31</div><div class="a code" style="top:666px"><span class="o">      <span class="b">{</span><span class="b">}</span></span></div><div class="a ln" style="top:685px">32</div><div class="a code" style="top:685px"><span class="o">    <span class="b">]</span>,</span></div><div class="a ln" style="top:704px">33</div><div class="a code" style="top:704px"><span class="o">    </span><span class="k">"activeLayers"</span><span class="o">: </span><span class="n">2</span><span class="o">,</span></div><div class="a ln" style="top:723px">34</div><div class="a code" style="top:723px"><span class="o">    </span><span class="k">"dynamicCubemap"</span><span class="o">: </span><span class="t">true</span><span class="o">,</span></div><div class="a ln" style="top:742px">35</div><div class="a code" style="top:742px"><span class="o">    </span><span class="k">"materialTag0"</span><span class="o">: </span><span class="s">"beamng"</span><span class="o">,</span></div><div class="a ln" style="top:761px">36</div><div class="a code" style="top:761px"><span class="o">    </span><span class="k">"materialTag1"</span><span class="o">: </span><span class="s">"vehicle"</span><span class="o">,</span></div><div class="a ln" style="top:780px">37</div><div class="a code" style="top:780px"><span class="o">    </span><span class="k">"order_simset"</span><span class="o">: </span><span class="n">0</span><span class="o">,</span></div><div class="a ln" style="top:799px">38</div><div class="a code" style="top:799px"><span class="o">    </span><span class="k">"version"</span><span class="o">: </span><span class="n">1.5</span></div><div class="a ln" style="top:818px">39</div><div class="a code" style="top:818px"><span class="o">  <span class="b">}</span>,</span></div><div class="a ln" style="top:837px">40</div><div class="a code" style="top:837px"><span class="o"><span class="b">}</span></span></div><div class="a ln" style="top:856px">41</div><div class="a" style="left:0;top:1017px;width:1920px;height:22px;background:#f0f0f0"></div><div class="a" style="left:0;top:1039px;width:1920px;height:1px;background:#fafafa"></div><div class="a" style="left:2.00px;top:1023px;font-family:'Liberation Sans',sans-serif;font-size:12px;line-height:15px;color:#000;white-space:pre;letter-spacing:-0.500px;">JSON file</div><div class="a" style="left:1159px;top:1019px;width:1px;height:19px;background:#d6d6d6"></div><div class="a" style="left:1379px;top:1019px;width:1px;height:19px;background:#d6d6d6"></div><div class="a" style="left:1639px;top:1019px;width:1px;height:19px;background:#d6d6d6"></div><div class="a" style="left:1749px;top:1019px;width:1px;height:19px;background:#d6d6d6"></div><div class="a" style="left:1869px;top:1019px;width:1px;height:19px;background:#d6d6d6"></div><div class="a" style="left:1899px;top:1019px;width:1px;height:19px;background:#d6d6d6"></div><div class="a" style="left:1164.00px;top:1023px;font-family:'Liberation Sans',sans-serif;font-size:12px;line-height:15px;color:#000;white-space:pre;letter-spacing:-0.308px;">length : 1,333</div><div class="a" style="left:1246.00px;top:1023px;font-family:'Liberation Sans',sans-serif;font-size:12px;line-height:15px;color:#000;white-space:pre;letter-spacing:-0.500px;">lines : 41</div><div class="a" style="left:1384.50px;top:1023px;font-family:'Liberation Sans',sans-serif;font-size:12px;line-height:15px;color:#000;white-space:pre;letter-spacing:-0.583px;">Ln : 10</div><div class="a" style="left:1430.50px;top:1023px;font-family:'Liberation Sans',sans-serif;font-size:12px;line-height:15px;color:#000;white-space:pre;letter-spacing:-0.500px;">Col : 22</div><div class="a" style="left:1481.00px;top:1023px;font-family:'Liberation Sans',sans-serif;font-size:12px;line-height:15px;color:#000;white-space:pre;letter-spacing:-0.636px;">Sel : 12 | 1</div><div class="a" style="left:1644.00px;top:1023px;font-family:'Liberation Sans',sans-serif;font-size:12px;line-height:15px;color:#000;white-space:pre;letter-spacing:-0.357px;">Windows (CR LF)</div><div class="a" style="left:1754.50px;top:1023px;font-family:'Liberation Sans',sans-serif;font-size:12px;line-height:15px;color:#000;white-space:pre;letter-spacing:-0.875px;">UTF-8</div><div class="a" style="left:1874.50px;top:1023px;font-family:'Liberation Sans',sans-serif;font-size:12px;line-height:15px;color:#000;white-space:pre;letter-spacing:-1.250px;">INS</div><div class="a" style="left:0;top:1040px;width:1920px;height:40px;background:#332c28"></div><svg class="a" style="left:15px;top:1052px" width="17" height="16" viewBox="0 0 17 16"><path d="M0 2.2L7 1.2V7.5H0z M8 1.05L17 0V7.5H8z M0 8.5H7v6.3L0 13.8z M8 8.5H17V16L8 14.95z" fill="#fff"/></svg><div class="a" style="left:48px;top:1040px;width:288px;height:40px;background:#fff;border:2px solid #a9a6a4"></div><svg class="a" style="left:60px;top:1052px" width="17" height="17" viewBox="0 0 17 17"><circle cx="10.5" cy="6.5" r="5.6" fill="none" stroke="#111" stroke-width="1.3"/><path d="M6.5 10.5L0.8 16.2" stroke="#111" stroke-width="1.5"/></svg><div class="a" style="left:88.50px;top:1052px;font-family:'Liberation Sans',sans-serif;font-size:15px;line-height:18px;color:#1a1a1a;white-space:pre;letter-spacing:-0.306px;">Type here to search</div><div class="a" style="left:1270px;top:1040px;width:48px;height:40px;background:#58524e"></div><svg class="a" style="left:351px;top:1048px" width="24" height="24" viewBox="0 0 24 24"><circle cx="12" cy="12" r="11.5" fill="#db4437"/>
<path d="M12 12L1.5 6.5A11.5 11.5 0 0 0 8.5 23z" fill="#0f9d58"/><path d="M12 12L8.5 23A11.5 11.5 0 0 0 23.5 11.5L22.5 6.5z" fill="#f4b400"/>
<path d="M12 6.8h10.6A11.5 11.5 0 0 1 23.5 12L12 12z" fill="#f4b400"/>
<circle cx="12" cy="12" r="5.3" fill="#fff"/><circle cx="12" cy="12" r="4.1" fill="#4285f4"/></svg><svg class="a" style="left:400px;top:1048px" width="24" height="24" viewBox="0 0 24 24"><defs><linearGradient id="eg1" x1="0" y1="0" x2="1" y2="1"><stop offset="0" stop-color="#1fb0e8"/><stop offset="0.6" stop-color="#36c28a"/><stop offset="1" stop-color="#7ee35a"/></linearGradient></defs>
<path d="M12 0.5A11.5 11.5 0 0 1 23.5 12q0 3.5-3.5 3.5h-8q0-3.5 3-4q-1-4-4-4q-7 0-10 4A11.5 11.5 0 0 1 12 0.5z" fill="url(#eg1)"/>
<path d="M0.5 12q3-5 9-4.5q-5 2-3.5 8q2 6 9 7A11.5 11.5 0 0 1 0.5 12z" fill="#1275d0"/>
<path d="M7 14q0 6 7 8q4 0.5 6.5-2.5q-4 1-7-1q-4-2-3-6q-2-1-3.5 1.5z" fill="#0b5db6"/></svg><svg class="a" style="left:449px;top:1048px" width="24" height="24" viewBox="0 0 24 24"><path d="M1 3h8l2 2h12v16h-22z" fill="#e8a623"/><rect x="1" y="6" width="22" height="15" fill="#ffd35b"/><path d="M5 13h14v9h-4v-5h-6v5h-4z" fill="#3b9be8"/></svg><svg class="a" style="left:498px;top:1048px" width="24" height="24" viewBox="0 0 24 24"><path d="M0.5 9L12 1l11.5 8v14h-23z" fill="#0a64c8"/><path d="M0.5 9h23v14h-23z" fill="#2aa6ef"/><path d="M0.5 9l11.5 8 11.5-8" fill="#e9e9e9"/><path d="M0.5 9l11.5 8 11.5-8v1.5l-11.5 8-11.5-8z" fill="#1b7ed6"/><path d="M0.5 23L12 15l11.5 8z" fill="#47bdf7"/></svg><svg class="a" style="left:547px;top:1048px" width="24" height="24" viewBox="0 0 24 24"><circle cx="12" cy="12" r="12" fill="#b5391f"/><path d="M5 4.5h10.5q4.5 0 4 4.2l-0.5 2q-0.8 3-4.5 3h-4.5l-1.5 7.5h-3.5z" fill="#fff"/><path d="M10.3 7.5h4q1.5 0 1.2 1.5l-0.4 1.8q-0.3 1-1.5 1h-4z" fill="#b5391f"/></svg><svg class="a" style="left:596px;top:1048px" width="24" height="24" viewBox="0 0 24 24"><path d="M6.5 5.5v-3q0-1.5 1.5-1.5h8q1.5 0 1.5 1.5v3" fill="none" stroke="#1aa5e0" stroke-width="1.8"/><rect x="0.5" y="5" width="23" height="19" rx="2" fill="#f4f4f4"/><rect x="0.5" y="19" width="23" height="5" rx="2" fill="#dcdcdc"/>
<rect x="7" y="9" width="4.5" height="4.5" fill="#f25022"/><rect x="12.5" y="9" width="4.5" height="4.5" fill="#7fba00"/><rect x="7" y="14.5" width="4.5" height="4.5" fill="#00a4ef"/><rect x="12.5" y="14.5" width="4.5" height="4.5" fill="#ffb900"/></svg><svg class="a" style="left:645px;top:1048px" width="24" height="24" viewBox="0 0 24 24"><defs><radialGradient id="ffg" cx="0.7" cy="0.2" r="0.9"><stop offset="0" stop-color="#ffe23a"/><stop offset="0.45" stop-color="#ff8a1e"/><stop offset="0.8" stop-color="#ff3a5a"/><stop offset="1" stop-color="#d2147a"/></radialGradient></defs>
<path d="M14 0.5q3 3 2 5q6 2 6.5 8A11 11 0 0 1 1 13q0-4 2-6.5q0 2 1.5 3q1-5 6-6q-1 2 0 3q3-2 3.5-5.5z" fill="url(#ffg)"/>
<circle cx="12" cy="12" r="5.5" fill="#7a3be0"/><path d="M6.5 10q2-4 6-4q-3 1-3.5 4z" fill="#ff9a2a"/></svg><svg class="a" style="left:694px;top:1048px" width="24" height="24" viewBox="0 0 24 24"><path d="M12 1L21.5 6.5v11L12 23L2.5 17.5v-11z" fill="#12161c" stroke="#c8a85a" stroke-width="1.6"/><path d="M7 9l5-3 2 2-1.5 1.5 4.5 6-1.5 1.5-5-5.5-1.5 1z" fill="#c8a85a"/></svg><svg class="a" style="left:743px;top:1048px" width="24" height="24" viewBox="0 0 24 24"><rect x="0.5" y="0.5" width="23" height="23" rx="5" fill="#f07d0c"/><path d="M5 14q0-9 9-9q5 0 5 4q0 5-9 6q2 3 6 3q3 0 5-2q-2 5-8 5q-8 0-8-7z" fill="#fff"/><path d="M9.5 12.5q1-4 4.5-4.5q2 0 2 1.5q0 2.5-6.5 3z" fill="#f07d0c"/></svg><svg class="a" style="left:792px;top:1048px" width="24" height="24" viewBox="0 0 24 24"><circle cx="12" cy="12" r="11.5" fill="#2b9fd9"/><path d="M5 11.5l13-5-2 12-4.5-3.5-2 2 0.2-3.2 6-5.3-7.5 4.6z" fill="#fff"/></svg><svg class="a" style="left:841px;top:1048px" width="24" height="24" viewBox="0 0 24 24"><defs><linearGradient id="stg" x1="0" y1="0" x2="0" y2="1"><stop offset="0" stop-color="#15245a"/><stop offset="1" stop-color="#1a7ac8"/></linearGradient></defs>
<circle cx="12" cy="12" r="11.5" fill="url(#stg)"/><circle cx="15.5" cy="8.5" r="3.8" fill="none" stroke="#fff" stroke-width="1.6"/><circle cx="15.5" cy="8.5" r="1.9" fill="#fff"/><path d="M0.8 13.5l7 3q1-2.5 3.5-2l3-4" stroke="#fff" stroke-width="2.8" fill="none"/><circle cx="8.3" cy="16.5" r="2.6" fill="#fff"/></svg><svg class="a" style="left:890px;top:1048px" width="24" height="24" viewBox="0 0 24 24"><path d="M6 11L17.5 3M6 11L19 19M17.5 3L19 19" stroke="#111" stroke-width="1.4"/><circle cx="6" cy="11" r="5.3" fill="#ff6d00"/><circle cx="17.5" cy="3.5" r="3.2" fill="#ff6d00"/><circle cx="19.5" cy="19" r="4" fill="#ff6d00"/></svg><svg class="a" style="left:939px;top:1048px" width="24" height="24" viewBox="0 0 24 24"><path d="M1 17l9-6.5-5-0.2 4-2.5 5 0.2-3-3.5 3-0.5 5 4" stroke="#ea7600" stroke-width="2.4" fill="none" stroke-linejoin="round" stroke-linecap="round"/><circle cx="14.5" cy="13" r="6.8" fill="#ea7600"/><circle cx="14.5" cy="13" r="4.6" fill="#fff"/><circle cx="14.5" cy="13" r="2.6" fill="#265787"/></svg><svg class="a" style="left:988px;top:1048px" width="24" height="24" viewBox="0 0 24 24"><path d="M12 1.5L22 6v12.5L12 23 2 18.5V6z" fill="#7a5234"/><path d="M12 1.5L22 6 12 10.5 2 6z" fill="#6aa642"/><path d="M2 6l10 4.5v3L2 9z" fill="#5a8f37"/><path d="M22 6l-10 4.5v3L22 9z" fill="#4f7e30"/><path d="M12 10.5V23L22 18.5V6z" fill="#5e3f28" opacity="0.6"/>
<rect x="5" y="13" width="2" height="2" fill="#9a7050"/><rect x="15" y="15" width="2" height="2" fill="#4a3020"/><rect x="8" y="17" width="2" height="2" fill="#5e3f28"/></svg><svg class="a" style="left:1037px;top:1048px" width="24" height="24" viewBox="0 0 24 24"><ellipse cx="12" cy="12" rx="11" ry="11.5" fill="none" stroke="#e8254a" stroke-width="1.8"/><ellipse cx="13" cy="12" rx="5.5" ry="10" fill="none" stroke="#e8254a" stroke-width="1.6"/></svg><svg class="a" style="left:1086px;top:1048px" width="24" height="24" viewBox="0 0 24 24"><rect x="3" y="0.5" width="18" height="23" rx="1" fill="#6f7a84"/><rect x="4.5" y="2" width="15" height="3.5" fill="#3fc2f0"/>
<rect x="4.5" y="7.5" width="3.5" height="3.5" fill="#dfe4e8"/><rect x="9.5" y="7.5" width="3.5" height="3.5" fill="#dfe4e8"/><rect x="14.5" y="7.5" width="4.5" height="3.5" fill="#dfe4e8"/>
<rect x="4.5" y="12.5" width="3.5" height="3.5" fill="#dfe4e8"/><rect x="9.5" y="12.5" width="3.5" height="3.5" fill="#dfe4e8"/><rect x="14.5" y="12.5" width="4.5" height="9.5" fill="#1a4f9e"/>
<rect x="4.5" y="17.5" width="3.5" height="3.5" fill="#dfe4e8"/><rect x="9.5" y="17.5" width="3.5" height="3.5" fill="#dfe4e8"/></svg><svg class="a" style="left:1135px;top:1048px" width="24" height="24" viewBox="0 0 24 24"><defs><linearGradient id="dg" x1="0.3" y1="0" x2="0.6" y2="1"><stop offset="0" stop-color="#ffd42a"/><stop offset="0.25" stop-color="#f2567a"/><stop offset="0.55" stop-color="#9b5ad8"/><stop offset="1" stop-color="#1fb6f5"/></linearGradient></defs>
<path d="M12 0.5q-1.5 4-5 8.5q-3 4-3 7.5a8 8 0 0 0 16 0q0-3.5-3-7.5q-3.5-4.5-5-8.5z" fill="url(#dg)"/></svg><svg class="a" style="left:1184px;top:1048px" width="24" height="24" viewBox="0 0 24 24"><path d="M11 4q9-1 10 5q1 6-7 9q-6 2-9 0q-3-2 0-4q2-1 0-2q-4-1-2-4q3-4 8-4z" fill="#cfe6f8" stroke="#8fb8d8" stroke-width="0.6"/>
<circle cx="5" cy="12" r="1.6" fill="#e84a3a"/><circle cx="7.5" cy="8.5" r="1.6" fill="#6ac040"/><circle cx="11.5" cy="7" r="1.6" fill="#f3a72a"/><circle cx="10" cy="13" r="1.2" fill="#333"/>
<path d="M20 3L11 22.5" stroke="#e88a1a" stroke-width="1.8"/><path d="M19.5 1.5l3.5 1.5-2 3-2.5-1z" fill="#e8c080"/></svg><svg class="a" style="left:1233px;top:1048px" width="24" height="24" viewBox="0 0 24 24"><path d="M12 9L22.5 14v3L12 22.5 1.5 17v-3z" fill="#1b75d0"/><path d="M12 7L22.5 12v3L12 20 1.5 15v-3z" fill="#e8202a"/><path d="M12 5L22.5 10v3L12 18 1.5 13v-3z" fill="#f6d20a"/><path d="M12 1.5L22.5 6.5v3.5L12 15.5 1.5 10v-3.5z" fill="#38b82c"/>
<ellipse cx="12" cy="7.5" rx="4.5" ry="3.2" fill="#6dd8f0"/><ellipse cx="12" cy="8" rx="3.5" ry="2.5" fill="#e848a0"/><ellipse cx="12.4" cy="7.4" rx="2.6" ry="2" fill="#141428"/></svg><svg class="a" style="left:1282px;top:1048px" width="24" height="24" viewBox="0 0 24 24"><defs><linearGradient id="ng2" x1="0" y1="0" x2="0" y2="1"><stop offset="0" stop-color="#fff"/><stop offset="0.4" stop-color="#eaf5c8"/><stop offset="0.7" stop-color="#9ad33a"/><stop offset="1" stop-color="#1f9a1f"/></linearGradient></defs>
<path d="M0.5 1.5h13.5l3 3v18.5h-16.5z" fill="url(#ng2)" stroke="#d8d8d8" stroke-width="1"/><path d="M2 2.5h11" stroke="#999" stroke-width="0.8" stroke-dasharray="1 1"/>
<rect x="5" y="7" width="1.6" height="8" fill="#222"/><rect x="5" y="7" width="3" height="1.2" fill="#222"/><rect x="8.5" y="10.5" width="1.2" height="1.2" fill="#333"/><rect x="10.5" y="10.5" width="1.2" height="1.2" fill="#333"/>
<path d="M21 1.5L11.5 19l-0.5 2.2 1.6-1.6L22.3 2.3z" fill="#f2b01e" stroke="#b07000" stroke-width="0.6"/><circle cx="21.8" cy="1.6" r="1.2" fill="#c02020"/></svg><div class="a" style="left:441px;top:1078px;width:40px;height:2px;background:#76b9ed"></div><div class="a" style="left:637px;top:1078px;width:40px;height:2px;background:#76b9ed"></div><div class="a" style="left:1270px;top:1078px;width:48px;height:2px;background:#76b9ed"></div><svg class="a" style="left:1538px;top:1049px" width="21" height="22" viewBox="0 0 21 22"><path d="M2 4.5h5v1.5l-1 2v-2l-1 3v-3l-1 2v-2l-1 1.5z" fill="#9fd0f5"/>
<rect x="10.5" y="0.8" width="6" height="15" rx="3" fill="#e8f1fa" stroke="#b8cfe6" stroke-width="1"/><circle cx="13.5" cy="17.2" r="4.6" fill="#e8f1fa" stroke="#b8cfe6" stroke-width="1"/><rect x="12.3" y="6" width="2.4" height="10" fill="#1a86e0"/><circle cx="13.5" cy="17.2" r="3.2" fill="#1a86e0"/></svg><div class="a" style="left:1570.00px;top:1053px;font-family:'Liberation Sans',sans-serif;font-size:14px;line-height:17px;color:#fff;white-space:pre;letter-spacing:-0.091px;">Cold weather</div><svg class="a" style="left:1677px;top:1056px" width="13" height="8" viewBox="0 0 13 8"><path d="M0.7 7.3L6.5 1.3L12.3 7.3" fill="none" stroke="#fff" stroke-width="1.2"/></svg><svg class="a" style="left:1698px;top:1054px" width="18" height="11" viewBox="0 0 18 11"><path d="M3.5 10.5q-3 0-3-2.5t3-2.5q0.5-4 4.5-4q3 0 4 2.5q4.5-0.5 5 3.5q0 3-3 3z" fill="#d8d8d8"/><path d="M3.5 10.5q-3 0-3-2.5t3-2.5h11q3 0.5 3 3t-3 2z" fill="#f2f2f2"/></svg><svg class="a" style="left:1725px;top:1055px" width="14" height="13" viewBox="0 0 14 13"><path d="M1 7.5Q6.5 1.5 12 4M3 9.5Q7 5.5 11 7M5.5 11.3Q8 9.5 10 10.2" fill="none" stroke="#ddd" stroke-width="1.2"/><circle cx="10.5" cy="11" r="1.7" fill="#fff"/></svg><svg class="a" style="left:1746px;top:1053px" width="18" height="15" viewBox="0 0 18 15"><path d="M1 5h3l4-4v13l-4-4h-3z" fill="none" stroke="#fff" stroke-width="1.2"/><path d="M10.5 5q1.5 2.5 0 5M12.8 3q2.8 4.5 0 9M15 1q4 6.5 0 13" fill="none" stroke="#fff" stroke-width="1.2"/></svg><div class="a" style="left:1773.50px;top:1053px;font-family:'Liberation Sans',sans-serif;font-size:11px;line-height:15px;color:#fff;white-space:pre;letter-spacing:-0.750px;">ENG</div><div class="a" style="left:1812.00px;top:1044px;font-family:'Liberation Sans',sans-serif;font-size:12px;line-height:15px;color:#fff;white-space:pre;letter-spacing:-0.571px;">10:07 PM</div><div class="a" style="left:1807.00px;top:1062px;font-family:'Liberation Sans',sans-serif;font-size:12px;line-height:15px;color:#fff;white-space:pre;letter-spacing:-0.278px;">11/18/2023</div><svg class="a" style="left:1878px;top:1051px" width="34" height="28" viewBox="0 0 34 28"><path d="M0.5 1h16v11h-6l-4 3v-3h-6z" fill="#fff"/><path d="M3 4h10M3 6.5h10M3 9h7" stroke="#332c28" stroke-width="1"/><circle cx="16.5" cy="16" r="9" fill="#332c28" stroke="#777" stroke-width="1"/></svg><div class="a" style="left:1888.00px;top:1060px;font-family:'Liberation Sans',sans-serif;font-size:12px;line-height:15px;color:#fff;white-space:pre;letter-spacing:-1.500px;">20</div><div class="a" style="left:1915px;top:1040px;width:1px;height:40px;background:#6b6562"></div></body></html>
